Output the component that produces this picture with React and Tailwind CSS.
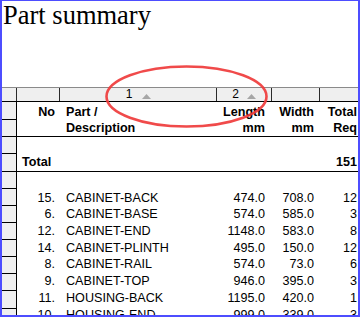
import React from 'react';

const rows = [
    ['15.', 'CABINET-BACK', '474.0', '708.0', '12', 'h-[17px]'],
    ['6.', 'CABINET-BASE', '574.0', '585.0', '3', 'h-[16px]'],
    ['12.', 'CABINET-END', '1148.0', '583.0', '8', 'h-[17px]'],
    ['14.', 'CABINET-PLINTH', '495.0', '150.0', '12', 'h-[17px]'],
    ['8.', 'CABINET-RAIL', '574.0', '73.0', '6', 'h-[16px]'],
    ['9.', 'CABINET-TOP', '946.0', '395.0', '3', 'h-[17px]'],
    ['11.', 'HOUSING-BACK', '1195.0', '420.0', '1', 'h-[17px]'],
    ['10.', 'HOUSING-END', '999.0', '339.0', '3', 'h-[17px]'],
];

// row header cells (height includes the bottom line)
const headerCells = ['h-[18px]', 'h-[17px]', 'h-[17px]', 'h-[18px]', 'h-[17px]', 'h-[17px]', 'h-[17px]', 'h-[17px]', 'h-[17px]', 'h-[17px]', 'h-[17px]', 'h-[18px]', 'h-[17px]'];

const Sort = () => (
    <svg width="9" height="5" viewBox="0 0 9 5" className="mb-[2px]">
        <polygon points="0,5 9,5 4.5,0" fill="#a6a6a6" />
    </svg>
);

const Row = ({ className = '', no, part, len, wid, tot, bold }) => (
    <div className={`flex shrink-0 items-end leading-[15px] ${bold ? 'font-bold' : ''} ${className}`}>
        <div className="w-[43px] shrink-0 pr-[5px] text-right">{no}</div>
        <div className="w-[157px] shrink-0 pl-[6px] whitespace-nowrap">{part}</div>
        <div className="w-[55px] shrink-0 pr-[7px] text-right">{len}</div>
        <div className="w-[48px] shrink-0 pr-[6px] text-right">{wid}</div>
        <div className="w-[43px] shrink-0 pr-[6px] text-right">{tot}</div>
    </div>
);

export default function App() {
    return (
        <div className="w-[362px] h-[318px] bg-white">
            <div className="relative w-[360px] h-[317px] border-2 border-t border-[#4d4dff] overflow-hidden bg-white text-black">
                {/* Title */}
                <div className="h-[86px]">
                    <div className="pl-[1px] text-[26.5px] leading-[28px]" style={{ fontFamily: '"Liberation Serif", serif' }}>
                        Part summary
                    </div>
                </div>

                <div style={{ fontFamily: '"Liberation Sans", Arial, sans-serif' }}>
                    {/* Column header strip */}
                    <div className="flex h-[15px] border-t border-t-[#8a8a8a] border-b border-b-black bg-[#efefef] text-[12px] leading-[13px]">
                        <div className="w-[15px] shrink-0 border-r border-[#2a2a2a]" />
                        <div className="w-[43px] shrink-0 border-r border-[#2a2a2a]" />
                        <div className="w-[157px] shrink-0 border-r border-[#2a2a2a] flex items-end justify-center gap-[10px] pl-[1px]">
                            <span>1</span>
                            <Sort />
                        </div>
                        <div className="w-[55px] shrink-0 border-r border-[#2a2a2a] flex items-end justify-center gap-[8px]">
                            <span>2</span>
                            <Sort />
                        </div>
                        <div className="w-[48px] shrink-0 border-r border-[#2a2a2a]" />
                        <div className="flex-1" />
                    </div>

                    <div className="flex">
                        {/* Row headers */}
                        <div className="w-[15px] shrink-0 border-r border-black bg-[#efefef] flex flex-col">
                            {headerCells.map((h, i) => (
                                <div key={i} className={`${h} shrink-0 border-b border-black`} />
                            ))}
                        </div>

                        {/* Data */}
                        <div className="flex flex-col text-[12.6px]">
                            <Row className="h-[18px]" bold no="No" part="Part /" len="Length" wid="Width" tot="Total" />
                            <Row className="h-[17px] border-b border-black" bold part="Description" len="mm" wid="mm" tot="Req" />
                            <div className="h-[17px] shrink-0" />
                            <div className="flex h-[18px] shrink-0 items-end pb-[1px] border-b border-black leading-[15px] font-bold">
                                <div className="w-[200px] shrink-0 pl-[5px]">Total</div>
                                <div className="w-[55px] shrink-0" />
                                <div className="w-[48px] shrink-0" />
                                <div className="w-[43px] shrink-0 pr-[6px] text-right">151</div>
                            </div>
                            <div className="h-[17px] shrink-0" />
                            {rows.map(([no, part, len, wid, tot, h]) => (
                                <Row key={no} className={h} no={no} part={part} len={len} wid={wid} tot={tot} />
                            ))}
                        </div>
                    </div>
                </div>

                {/* Red highlight ring */}
                <svg className="absolute left-[-2px] top-[-1px] pointer-events-none" width="362" height="318" viewBox="0 0 362 318">
                    <ellipse cx="186.5" cy="96.5" rx="80" ry="30" fill="none" stroke="#ef3b3b" strokeWidth="2.6" opacity="0.92" />
                </svg>
            </div>
        </div>
    );
}
